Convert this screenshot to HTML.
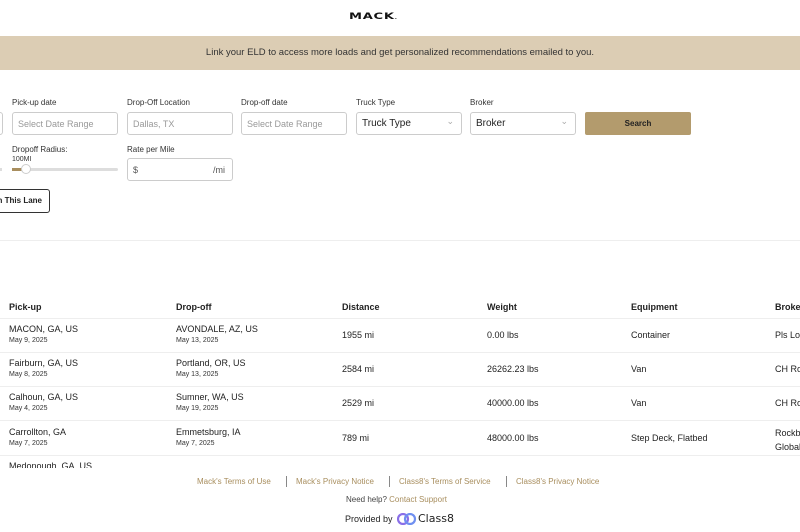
<!DOCTYPE html>
<html><head><style>
*{margin:0;padding:0;box-sizing:border-box}
body{width:800px;height:532px;overflow:hidden;background:#fff;font-family:"Liberation Sans",sans-serif;color:#222;position:relative}
.a{position:absolute;white-space:nowrap}
.lbl{font-size:8px;color:#333}
.inp{position:absolute;height:23px;border:1px solid #ccc;border-radius:3px;font-size:9px;color:#999;padding:6px 5px;background:#fff}
.sel{color:#222;font-size:10px}
.sel::after{content:"⌄";position:absolute;right:7px;top:3px;color:#aaa;font-size:9px}
.h{font-size:9px;font-weight:bold;color:#222}
.c{font-size:9px;color:#222}
.d{font-size:7px;color:#333}
.ln{position:absolute;left:0;width:800px;height:1px;background:#eee}
.f{font-size:8px;color:#a88e5e}
</style></head><body>
<div class="a" style="left:349px;top:12px;font-weight:900;font-size:9px;letter-spacing:0.5px;color:#111;font-family:'DejaVu Sans',sans-serif;transform:scaleX(1.45);transform-origin:left">MACK<span style="font-size:4px">.</span></div>
<div class="a" style="left:0;top:36px;width:800px;height:34px;background:#dccdb4"></div>
<div class="a" style="left:0;top:47px;width:800px;text-align:center;font-size:9.5px;color:#333">Link your ELD to access more loads and get personalized recommendations emailed to you.</div>
<div class="a" style="left:-5px;top:112px;width:8px;height:23px;border:1px solid #ccc;border-radius:3px"></div>
<div class="a lbl" style="left:12px;top:98px">Pick-up date</div>
<div class="inp" style="left:12px;top:112px;width:106px">Select Date Range</div>
<div class="a lbl" style="left:127px;top:98px">Drop-Off Location</div>
<div class="inp" style="left:127px;top:112px;width:106px">Dallas, TX</div>
<div class="a lbl" style="left:241px;top:98px">Drop-off date</div>
<div class="inp" style="left:241px;top:112px;width:106px">Select Date Range</div>
<div class="a lbl" style="left:356px;top:98px">Truck Type</div>
<div class="inp sel" style="left:356px;top:112px;width:106px;padding-top:5px">Truck Type</div>
<div class="a lbl" style="left:470px;top:98px">Broker</div>
<div class="inp sel" style="left:470px;top:112px;width:106px;padding-top:5px">Broker</div>
<div class="a" style="left:585px;top:112px;width:106px;height:23px;background:#b39b6d;border-radius:2px;text-align:center;font-size:8px;font-weight:bold;line-height:23px;color:#222">Search</div>
<div class="a lbl" style="left:12px;top:145px">Dropoff Radius:</div>
<div class="a" style="left:12px;top:156px;font-size:7px;color:#333">100MI</div>
<div class="a" style="left:12px;top:168px;width:106px;height:3px;background:#ddd;border-radius:2px"></div>
<div class="a" style="left:12px;top:168px;width:12px;height:3px;background:#a88e5e"></div>
<div class="a" style="left:21px;top:164px;width:10px;height:10px;border-radius:50%;background:#fff;border:1px solid #ccc"></div>
<div class="a" style="left:-4px;top:168px;width:6px;height:3px;background:#ddd"></div>
<div class="a lbl" style="left:127px;top:145px">Rate per Mile</div>
<div class="inp" style="left:127px;top:158px;width:106px;height:23px;color:#555">$<span style="position:absolute;right:7px">/mi</span></div>
<div class="a" style="left:-10px;top:189px;width:60px;height:24px;border:1px solid #333;border-radius:3px;font-size:8px;font-weight:bold;line-height:22px;text-align:right;padding-right:7px">n This Lane</div>
<div class="ln" style="top:240px"></div>
<div class="a h" style="left:9px;top:302px">Pick-up</div>
<div class="a h" style="left:176px;top:302px">Drop-off</div>
<div class="a h" style="left:342px;top:302px">Distance</div>
<div class="a h" style="left:487px;top:302px">Weight</div>
<div class="a h" style="left:631px;top:302px">Equipment</div>
<div class="a h" style="left:775px;top:302px">Broker</div>
<div class="ln" style="top:318px"></div>
<div class="a c" style="left:9px;top:324px">MACON, GA, US</div><div class="a d" style="left:9px;top:337px">May 9, 2025</div>
<div class="a c" style="left:176px;top:324px">AVONDALE, AZ, US</div><div class="a d" style="left:176px;top:337px">May 13, 2025</div>
<div class="a c" style="left:342px;top:330px">1955 mi</div><div class="a c" style="left:487px;top:330px">0.00 lbs</div><div class="a c" style="left:631px;top:330px">Container</div><div class="a c" style="left:775px;top:330px">Pls Logistics</div>
<div class="ln" style="top:352px"></div>
<div class="a c" style="left:9px;top:358px">Fairburn, GA, US</div><div class="a d" style="left:9px;top:371px">May 8, 2025</div>
<div class="a c" style="left:176px;top:358px">Portland, OR, US</div><div class="a d" style="left:176px;top:371px">May 13, 2025</div>
<div class="a c" style="left:342px;top:364px">2584 mi</div><div class="a c" style="left:487px;top:364px">26262.23 lbs</div><div class="a c" style="left:631px;top:364px">Van</div><div class="a c" style="left:775px;top:364px">CH Robinson</div>
<div class="ln" style="top:386px"></div>
<div class="a c" style="left:9px;top:392px">Calhoun, GA, US</div><div class="a d" style="left:9px;top:405px">May 4, 2025</div>
<div class="a c" style="left:176px;top:392px">Sumner, WA, US</div><div class="a d" style="left:176px;top:405px">May 19, 2025</div>
<div class="a c" style="left:342px;top:398px">2529 mi</div><div class="a c" style="left:487px;top:398px">40000.00 lbs</div><div class="a c" style="left:631px;top:398px">Van</div><div class="a c" style="left:775px;top:398px">CH Robinson</div>
<div class="ln" style="top:420px"></div>
<div class="a c" style="left:9px;top:427px">Carrollton, GA</div><div class="a d" style="left:9px;top:440px">May 7, 2025</div>
<div class="a c" style="left:176px;top:427px">Emmetsburg, IA</div><div class="a d" style="left:176px;top:440px">May 7, 2025</div>
<div class="a c" style="left:342px;top:433px">789 mi</div><div class="a c" style="left:487px;top:433px">48000.00 lbs</div><div class="a c" style="left:631px;top:433px">Step Deck, Flatbed</div><div class="a c" style="left:775px;top:426px;line-height:14px">Rockbridge<br>Global</div>
<div class="ln" style="top:455px"></div>
<div class="a c" style="left:9px;top:461px">Medonough, GA, US</div>
<div class="a" style="left:0;top:468px;width:800px;height:64px;background:#fff"></div>
<div class="a f" style="left:197px;top:477px">Mack's Terms of Use</div>
<div class="a" style="left:286px;top:476px;width:1px;height:11px;background:#888"></div>
<div class="a f" style="left:296px;top:477px">Mack's Privacy Notice</div>
<div class="a" style="left:389px;top:476px;width:1px;height:11px;background:#888"></div>
<div class="a f" style="left:399px;top:477px">Class8's Terms of Service</div>
<div class="a" style="left:506px;top:476px;width:1px;height:11px;background:#888"></div>
<div class="a f" style="left:516px;top:477px">Class8's Privacy Notice</div>
<div class="a" style="left:346px;top:495px;font-size:8px;color:#444">Need help? <span style="color:#a88e5e">Contact Support</span></div>
<div class="a" style="left:345px;top:514px;font-size:9px;color:#222">Provided by</div>
<svg class="a" style="left:397px;top:513px" width="20" height="12" viewBox="0 0 20 12"><circle cx="6" cy="6" r="5" fill="none" stroke="#8a6fe8" stroke-width="2.2"/><circle cx="13" cy="6" r="5" fill="none" stroke="#6f8ff0" stroke-width="2.2"/></svg>
<div class="a" style="left:418px;top:512px;font-size:11px;color:#222;font-family:'DejaVu Sans',sans-serif">Class8</div>
</body></html>
